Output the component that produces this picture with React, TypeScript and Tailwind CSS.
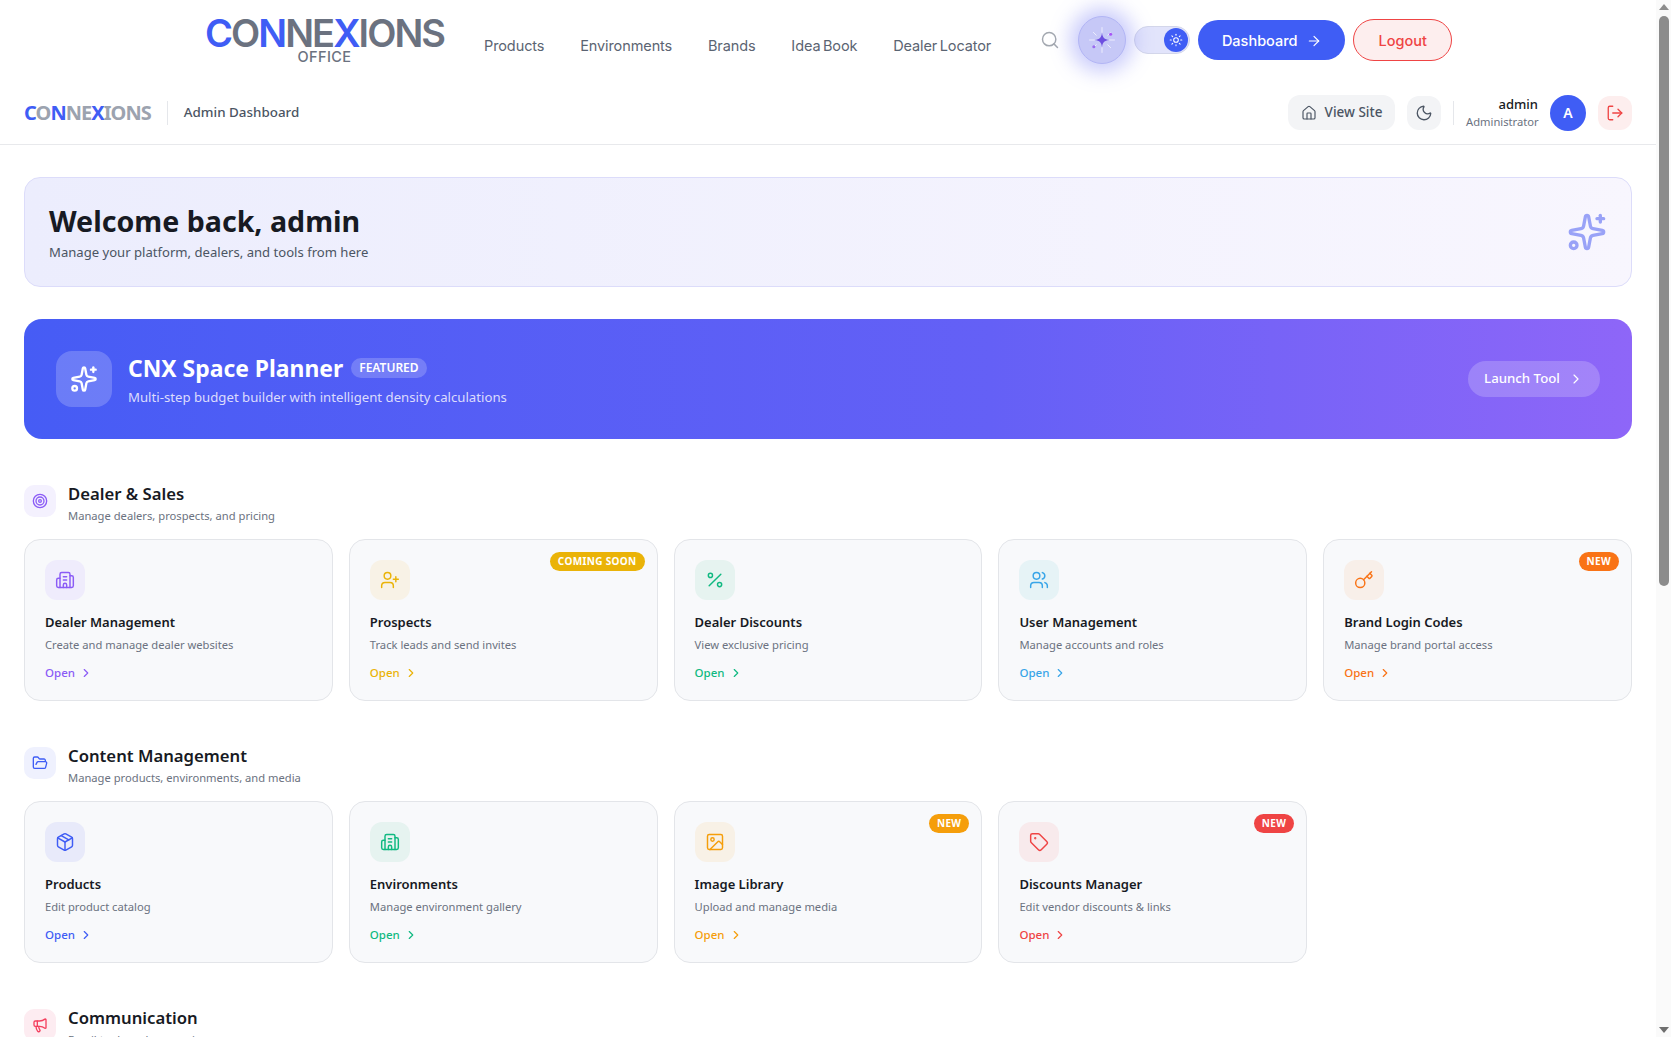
import React from "react";
import {
  ArrowRight, Building2, ChevronRight, FolderOpen, Home, Image, Key, LogOut, Megaphone, Moon,
  Package, Percent, Search, Sparkles, Sun, Tag, Target, UserPlus, Users,
} from "lucide-react";

type Card = {
  title: string; desc: string; Icon: React.ComponentType<{ className?: string; strokeWidth?: number }>;
  tile: string; text: string; badge?: string; badgeBg?: string;
};

const dealer: Card[] = [
  { title: "Dealer Management", desc: "Create and manage dealer websites", Icon: Building2, tile: "bg-[#efecfc]", text: "text-[#8b5cf6]" },
  { title: "Prospects", desc: "Track leads and send invites", Icon: UserPlus, tile: "bg-[#f8f2e6]", text: "text-[#eab308]", badge: "COMING SOON", badgeBg: "bg-[#eab308]" },
  { title: "Dealer Discounts", desc: "View exclusive pricing", Icon: Percent, tile: "bg-[#e6f3f0]", text: "text-[#10b981]" },
  { title: "User Management", desc: "Manage accounts and roles", Icon: Users, tile: "bg-[#e6f3f6]", text: "text-[#38a5e8]" },
  { title: "Brand Login Codes", desc: "Manage brand portal access", Icon: Key, tile: "bg-[#f8efe9]", text: "text-[#f97316]", badge: "NEW", badgeBg: "bg-[#f97316]" },
];

const content: Card[] = [
  { title: "Products", desc: "Edit product catalog", Icon: Package, tile: "bg-[#e8eafa]", text: "text-[#3f5df5]" },
  { title: "Environments", desc: "Manage environment gallery", Icon: Building2, tile: "bg-[#e6f3f0]", text: "text-[#10b981]" },
  { title: "Image Library", desc: "Upload and manage media", Icon: Image, tile: "bg-[#f8f1e6]", text: "text-[#f59e0b]", badge: "NEW", badgeBg: "bg-[#f59e0b]" },
  { title: "Discounts Manager", desc: "Edit vendor discounts & links", Icon: Tag, tile: "bg-[#f8eaec]", text: "text-[#ef4444]", badge: "NEW", badgeBg: "bg-[#ef4444]" },
];

function ToolCard({ card }: { card: Card }) {
  const { Icon } = card;
  return (
    <div className="relative h-[162px] rounded-2xl border border-[#e3e5e9] bg-[#f8f9fb] p-5">
      {card.badge && (
        <span className={`absolute right-3 top-[12px] flex h-[19px] items-center rounded-full px-2 text-[10px] font-bold tracking-[0.35px] text-white ${card.badgeBg}`}>
          {card.badge}
        </span>
      )}
      <div className={`flex h-10 w-10 items-center justify-center rounded-xl ${card.tile} ${card.text}`}>
        <Icon className="h-5 w-5" strokeWidth={1.75} />
      </div>
      <h3 className="mt-3 text-[13px] font-semibold leading-5 text-[#171a23]">{card.title}</h3>
      <p className="mt-[3px] text-[11.2px] leading-5 text-[#6b7280]">{card.desc}</p>
      <div className={`mt-[10px] flex items-center gap-1 text-[11.5px] font-medium leading-4 ${card.text}`}>
        <span>Open</span>
        <ChevronRight className="h-[14px] w-[14px]" strokeWidth={2} />
      </div>
    </div>
  );
}

function SectionHead({ title, sub, Icon, tile, color }: { title: string; sub: string; Icon: Card["Icon"]; tile: string; color: string }) {
  return (
    <div className="flex h-[55px] items-start gap-3">
      <div className={`mt-[1px] flex h-8 w-8 items-center justify-center rounded-[10px] ${tile} ${color}`}>
        <Icon className="h-4 w-4" strokeWidth={2} />
      </div>
      <div>
        <h2 className="text-[16.7px] font-semibold leading-[20px] text-[#171a23]">{title}</h2>
        <p className="mt-1 text-[11.2px] leading-4 text-[#6b7280]">{sub}</p>
      </div>
    </div>
  );
}

function Logo({ big }: { big?: boolean }) {
  const gray = big ? "text-[#6b7280]" : "text-[#9ca3af]";
  return (
    <span className={big ? "font-['Inter',sans-serif] text-[38px] font-semibold leading-[34px] tracking-[-1.95px]" : "font-['Noto_Sans',sans-serif] text-[20px] font-bold leading-6 tracking-[-0.95px]"}>
      <span className="text-[#3f5df5]">C</span>
      <span className={gray}>O</span>
      <span className="text-[#3f5df5]">N</span>
      <span className={gray}>NE</span>
      <span className="text-[#3f5df5]">X</span>
      <span className={gray}>IONS</span>
    </span>
  );
}

function Orb() {
  return (
    <svg viewBox="0 0 48 48" className="h-[46px] w-[46px]">
      <g stroke="#ffffff" strokeOpacity="0.7" strokeWidth="1" strokeLinecap="round">
        <path d="M24 11v5M24 32v5M11 24h5M32 24h5M15 16l3 3M33 16l-3 3M15 32l3-3M33 32l-3-3" />
      </g>
      <path d="M24 16.5c.6 5 2.5 6.9 7.5 7.5-5 .6-6.9 2.5-7.5 7.5-.6-5-2.5-6.9-7.5-7.5 5-.6 6.9-2.5 7.5-7.5z" fill="#6d4fe0" />
      <circle cx="33" cy="18" r="1.6" fill="#a855f7" />
      <circle cx="15.5" cy="31" r="1.6" fill="#9b6cf0" />
    </svg>
  );
}

const navItems = ["Products", "Environments", "Brands", "Idea Book", "Dealer Locator"];

export default function App() {
  return (
    <div className="flex h-[1037px] overflow-hidden bg-white font-['Noto_Sans',sans-serif]">
      <div className="min-w-0 flex-1 overflow-hidden">
        {/* Site navigation */}
        <header className="flex h-[85px] items-start font-['Inter',sans-serif]">
          <div className="ml-[205px] mt-[16px] flex w-[239px] flex-col items-center">
            <Logo big />
            <span className="text-[14.5px] font-medium leading-[14px] tracking-[0.4px] text-[#6b7280]">OFFICE</span>
          </div>
          <nav className="ml-[40px] mt-[36px] flex gap-[35.8px] text-[14.5px] leading-5 tracking-[-0.1px] text-[#5b6472] [word-spacing:-1.5px]">
            {navItems.map((n) => <span key={n}>{n}</span>)}
          </nav>
          <Search className="ml-[49px] mt-[30px] h-5 w-5 text-[#a3a8b0]" strokeWidth={1.75} />
          <div className="relative ml-[18px] mt-[16px] flex h-[48px] w-[48px] items-center justify-center rounded-full border border-[#b2b5f5] bg-[#c6c8f7] shadow-[0_0_20px_8px_rgba(120,125,245,0.4)]">
            <Orb />
          </div>
          <div className="ml-[8px] mt-[26px] flex h-[28px] w-[56px] items-center justify-end rounded-full border border-[#d3d6ea] bg-[#e2e4fb] pr-[1px]">
            <span className="flex h-6 w-6 items-center justify-center rounded-full bg-[#3f5df5] text-white">
              <Sun className="h-[14px] w-[14px]" strokeWidth={1.75} />
            </span>
          </div>
          <button className="ml-[8px] mt-[20px] flex h-10 w-[147px] items-center justify-center gap-2 rounded-full bg-[#3f5df5] pt-[1px] text-[14.5px] font-medium text-white">
            Dashboard <ArrowRight className="h-4 w-4" strokeWidth={1.75} />
          </button>
          <button className="ml-[8px] mt-[19px] flex h-[42px] w-[99px] items-center justify-center rounded-full border border-[#ef4444] bg-[#fdeeee] pt-[1px] text-[14.5px] font-medium text-[#ef4444]">
            Logout
          </button>
        </header>

        {/* Admin bar */}
        <div className="flex h-[60px] items-center border-b border-[#e8e9ec] px-6 pb-[4px]">
          <Logo />
          <div className="ml-4 h-6 w-px bg-[#e5e7eb]" />
          <span className="ml-4 text-[13.4px] font-medium text-[#4b5563]">Admin Dashboard</span>
          <div className="ml-auto flex items-center">
            <button className="flex h-[35px] w-[107px] items-center justify-center gap-2 rounded-xl bg-[#f3f4f6] text-[13.5px] font-medium text-[#4b5563]">
              <Home className="h-4 w-4" strokeWidth={1.75} /> View Site
            </button>
            <button className="ml-3 flex h-[34px] w-[34px] items-center justify-center rounded-xl bg-[#f3f4f6] text-[#4b5563]">
              <Moon className="h-[18px] w-[18px]" strokeWidth={1.75} />
            </button>
            <div className="ml-3 h-6 w-px bg-[#e5e7eb]" />
            <div className="ml-3 w-[72px] text-right">
              <div className="text-[13px] font-medium leading-[18px] text-[#171a23]">admin</div>
              <div className="text-[11.2px] leading-[17px] text-[#6b7280]">Administrator</div>
            </div>
            <div className="ml-3 flex h-9 w-9 items-center justify-center rounded-full bg-[#3f5df5] text-[14px] font-semibold text-white">A</div>
            <button className="ml-3 flex h-[34px] w-[34px] items-center justify-center rounded-xl bg-[#fdeeee] text-[#ef4444]">
              <LogOut className="h-[18px] w-[18px]" strokeWidth={1.75} />
            </button>
          </div>
        </div>

        <main className="px-6 pt-8">
          {/* Welcome */}
          <section className="flex h-[110px] items-center justify-between rounded-2xl border border-[#dcdcfa] bg-gradient-to-r from-[#ecedfd] to-[#f8f6fe] px-6">
            <div>
              <h1 className="text-[28.6px] font-bold leading-[36px] text-[#171a23]">Welcome back, admin</h1>
              <p className="mt-[3px] text-[13.1px] leading-5 text-[#4b5563]">Manage your platform, dealers, and tools from here</p>
            </div>
            <Sparkles className="h-10 w-10 text-[#99a2f7]" strokeWidth={2} />
          </section>

          {/* Featured */}
          <section className="mt-[32px] flex h-[120px] items-center rounded-[18px] bg-gradient-to-r from-[#465cf5] via-[#6460f6] via-60% to-[#8e66f8] px-8">
            <div className="flex h-14 w-14 items-center justify-center rounded-2xl bg-white/20 text-white">
              <Sparkles className="h-7 w-7" strokeWidth={2} />
            </div>
            <div className="ml-4 pt-[2px]">
              <div className="flex items-center gap-2">
                <h2 className="text-[22.9px] font-bold leading-8 text-white">CNX Space Planner</h2>
                <span className="-mt-[3px] flex h-5 items-center rounded-full bg-white/20 px-2 text-[12px] font-semibold text-white">FEATURED</span>
              </div>
              <p className="mt-[2px] text-[13.2px] leading-5 text-[#dcdcfd]">Multi-step budget builder with intelligent density calculations</p>
            </div>
            <button className="ml-auto flex h-9 w-[132px] items-center justify-center gap-2 rounded-full bg-white/20 text-[13.25px] font-medium text-white">
              Launch Tool <ChevronRight className="h-4 w-4" strokeWidth={1.75} />
            </button>
          </section>

          {/* Dealer & Sales */}
          <section className="mt-[45px]">
            <SectionHead title="Dealer & Sales" sub="Manage dealers, prospects, and pricing" Icon={Target} tile="bg-[#f4f1fe]" color="text-[#8b5cf6]" />
            <div className="grid grid-cols-5 gap-4">
              {dealer.map((c) => <ToolCard key={c.title} card={c} />)}
            </div>
          </section>

          {/* Content */}
          <section className="mt-[45px]">
            <SectionHead title="Content Management" sub="Manage products, environments, and media" Icon={FolderOpen} tile="bg-[#eff1fe]" color="text-[#3f5df5]" />
            <div className="grid grid-cols-5 gap-4">
              {content.map((c) => <ToolCard key={c.title} card={c} />)}
            </div>
          </section>

          {/* Communication */}
          <section className="mt-[45px]">
            <SectionHead title="Communication" sub="Email tools and messaging" Icon={Megaphone} tile="bg-[#fdecf1]" color="text-[#f43f5e]" />
          </section>
        </main>
      </div>

      {/* Browser scrollbar */}
      <aside className="flex h-full w-[15px] shrink-0 flex-col items-center bg-[#fafafa]">
        <span className="mt-[4px] h-0 w-0 border-x-[5px] border-b-[6px] border-x-transparent border-b-[#8c8c8c]" />
        <span className="mt-[6px] h-[570px] w-[10px] rounded-full bg-[#8c8c8c]" />
        <span className="mb-[4px] mt-auto h-0 w-0 border-x-[5px] border-t-[6px] border-x-transparent border-t-[#6e6e6e]" />
      </aside>
    </div>
  );
}
